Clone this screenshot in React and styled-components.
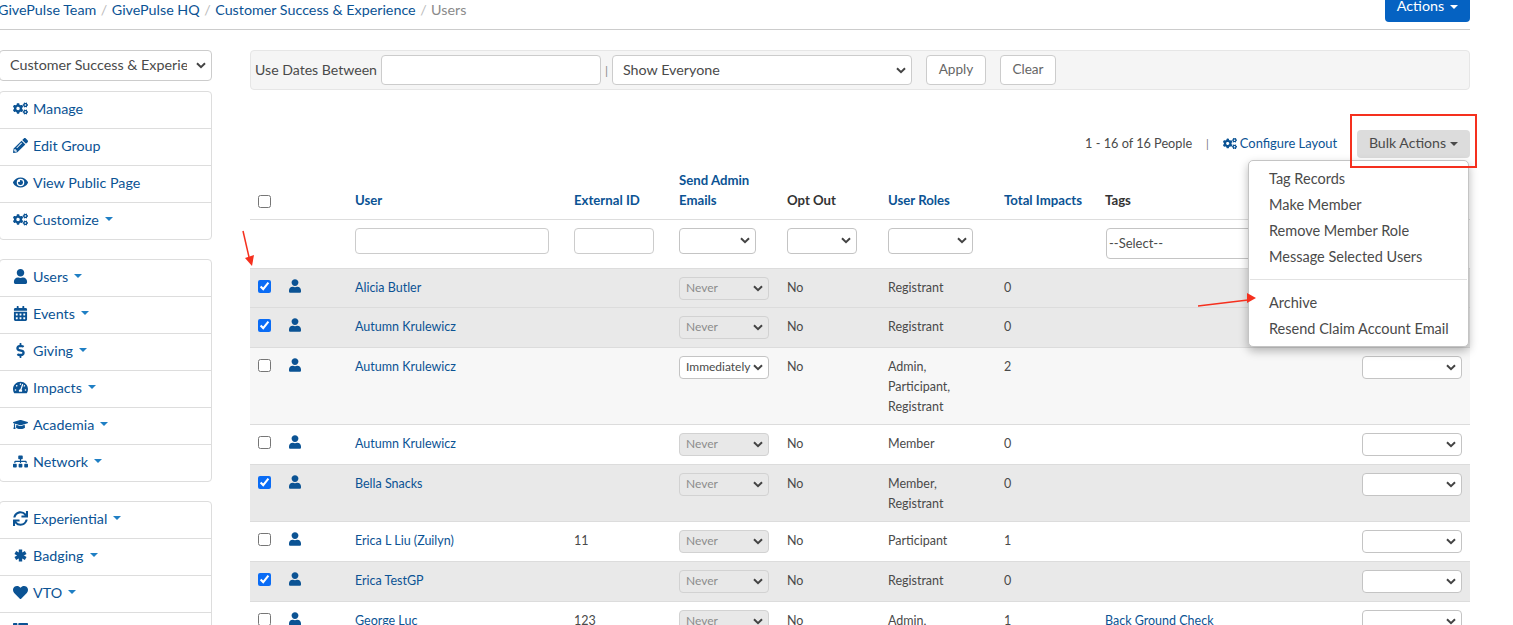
import React from "react";
import styled, {createGlobalStyle} from "styled-components";
import {
    FaCalendarAlt, FaCogs, FaDollarSign, FaEye, FaGraduationCap, FaHeart,
    FaPencilAlt, FaSitemap, FaSync, FaTachometerAlt, FaThList, FaUser
} from "react-icons/fa";

const BLUE = "#0b5394";
const TEXT = "#4a4a4a";
const CHEVRON = `url("data:image/svg+xml,%3Csvg xmlns='http://www.w3.org/2000/svg' width='10' height='7' viewBox='0 0 10 7'%3E%3Cpath d='M1 1.2l4 4 4-4' fill='none' stroke='%23444' stroke-width='2'/%3E%3C/svg%3E")`;

const Global = createGlobalStyle`
  html, body {
    margin: 0;
    height: 625px;
    overflow: hidden;
    background: #fff;
  }

  body {
    font-family: Lato, "Open Sans", sans-serif;
    font-size: 14.3px;
    color: ${TEXT};
  }

  * {
    box-sizing: border-box;
  }
`;

const Page = styled.div`
  width: 1471px;
  margin-left: -1px;
`;

const TopBar = styled.div`
  height: 30px;
  display: flex;
  justify-content: space-between;
  align-items: flex-start;
  border-bottom: 1px solid #ccc;
`;

const Crumbs = styled.div`
  display: flex;
  gap: 4.5px;
  height: 20px;
  line-height: 20px;
  margin-left: -1px;
  color: #8a8a8a;
`;

const CrumbLink = styled.span`
  color: ${BLUE};
`;

const Slash = styled.span`
  color: #bbb;
`;

const ActionsButton = styled.div`
  width: 85px;
  height: 34px;
  margin-top: -12px;
  padding-top: 9px;
  text-align: center;
  line-height: 17px;
  color: #fff;
  background: #0562c2;
  border-radius: 0 0 4px 4px;
`;

const Caret = styled.i`
  display: inline-block;
  margin-left: ${({$gap}) => $gap || 6}px;
  vertical-align: 2px;
  border-top: 4px solid ${({$color}) => $color || "currentColor"};
  border-left: 4px solid transparent;
  border-right: 4px solid transparent;
`;

const Columns = styled.div`
  display: flex;
  gap: 38px;
  padding-top: 20px;
`;

const Sidebar = styled.aside`
  width: 213px;
  flex: none;
`;

const GroupSelect = styled.select`
  appearance: none;
  display: block;
  width: 100%;
  height: 31px;
  padding: 0 24px 2px 10px;
  margin-bottom: 10px;
  font: inherit;
  color: ${TEXT};
  background: #fff ${CHEVRON} no-repeat right 5px center;
  border: 1px solid #ccc;
  border-radius: 4px;
`;

const NavPanel = styled.nav`
  margin-bottom: 19px;
  border: 1px solid #ddd;
  border-radius: 4px;
`;

const NavItem = styled.div`
  display: flex;
  align-items: center;
  height: ${({$first}) => ($first ? 36 : 37)}px;
  padding: 0 0 4px 13px;
  color: ${BLUE};
  border-top: ${({$first}) => ($first ? "none" : "1px solid #ddd")};

  svg {
    width: 15px;
    height: 15px;
    margin-right: 5px;
    flex: none;
  }
`;

const Main = styled.main`
  flex: 1;
  min-width: 0;
  position: relative;
`;

const FilterBar = styled.div`
  display: flex;
  align-items: center;
  height: 40px;
  padding: 0 4px;
  background: #f5f5f5;
  border: 1px solid #e6e6e6;
  border-radius: 4px;
`;

const FilterLabel = styled.span`
  margin-right: 4px;
  padding-bottom: 2px;
  font-size: 14.1px;
`;

const TextInput = styled.input`
  display: block;
  width: ${({$w}) => $w}px;
  height: ${({$h}) => $h || 26}px;
  background: #fff;
  border: 1px solid #ccc;
  border-radius: 4px;
`;

const Pipe = styled.span`
  margin: 0 4px;
  color: #888;
  font-size: 12px;
`;

const EveryoneSelect = styled.select`
  appearance: none;
  width: 300px;
  height: 30px;
  padding: 0 24px 2px 10px;
  margin-right: 14px;
  font: inherit;
  color: ${TEXT};
  background: #fff ${CHEVRON} no-repeat right 5px center;
  border: 1px solid #ccc;
  border-radius: 4px;
`;

const Plain = styled.button`
  height: 30px;
  width: ${({$w}) => $w}px;
  margin-right: 14px;
  padding: 0 0 2px;
  font: inherit;
  font-size: 13.6px;
  color: #666;
  background: #fff;
  border: 1px solid #ccc;
  border-radius: 4px;
`;

const Toolbar = styled.div`
  display: flex;
  justify-content: flex-end;
  align-items: center;
  height: 28px;
  margin: 40px 0 11px;
  font-size: 12.9px;
`;

const Count = styled.span`
  padding-bottom: 2px;
  font-size: 12.7px;
  color: ${TEXT};
`;

const Bar = styled.span`
  margin: 0 14px 0 14px;
  padding-bottom: 2px;
  color: #777;
  font-size: 11px;
`;

const ConfigLink = styled.span`
  display: flex;
  align-items: center;
  gap: 3px;
  margin-right: 20px;
  padding-bottom: 2px;
  color: ${BLUE};

  svg {
    width: 14px;
    height: 13px;
  }
`;

const BulkWrap = styled.div`
  position: relative;
`;

const BulkButton = styled.div`
  width: 113px;
  height: 28px;
  line-height: 26px;
  text-align: center;
  font-size: 14.1px;
  color: ${TEXT};
  background: #dcdcdc;
  border-radius: 4px;
`;

const RedBox = styled.div`
  position: absolute;
  top: -16px;
  left: -7px;
  width: 127px;
  height: 54px;
  border: 2px solid #f5301e;
  z-index: 3;
  pointer-events: none;
`;

const Menu = styled.div`
  position: absolute;
  top: 30px;
  right: 1px;
  width: 221px;
  height: 187px;
  padding: 5px 0;
  font-size: 14.5px;
  background: #fff;
  border: 1px solid #c4c4c4;
  border-radius: 5px;
  box-shadow: 0 4px 10px rgba(0, 0, 0, .28);
  z-index: 2;
`;

const MenuItem = styled.div`
  height: 26px;
  line-height: 26px;
  padding-left: 20px;
  white-space: nowrap;
`;

const MenuRule = styled.hr`
  height: 1px;
  margin: 9px 1px 10px;
  background: #e2e2e2;
  border: 0;
`;

const Table = styled.table`
  width: 100%;
  table-layout: fixed;
  border-collapse: collapse;
  font-size: 12.5px;
`;

const Head = styled.th`
  padding: 0 9px 9px;
  height: 50px;
  vertical-align: bottom;
  text-align: left;
  font-weight: 700;
  font-size: 13.2px;
  line-height: 20px;
  color: ${({$link}) => ($link ? BLUE : "#333")};
  border-bottom: 1px solid #ddd;
`;

const CheckHead = styled(Head)`
  padding-left: 8px;
  padding-bottom: 11px;
`;

const FilterCell = styled.td`
  height: 49px;
  padding: 8px 9px 0;
  vertical-align: top;
`;

const Row = styled.tr`
  height: ${({$h}) => $h}px;
  background: ${({$tone}) => $tone};
  border-top: 1px solid #dcdcdc;
`;

const Cell = styled.td`
  padding: 9px 9px 7px;
  vertical-align: top;
  line-height: 20px;
  color: ${({$link}) => ($link ? BLUE : TEXT)};
`;

const CheckCell = styled(Cell)`
  padding-left: 8px;
`;

const Check = styled.input.attrs({type: "checkbox"})`
  display: block;
  margin: ${({$head}) => ($head ? 0 : "2px 0 0")};
  width: 13px;
  height: 13px;
  accent-color: #0a6cf5;
`;

const PersonIcon = styled(FaUser)`
  display: block;
  width: 12px;
  height: 14px;
  margin-top: 1px;
  color: ${BLUE};
`;

const Picker = styled.select`
  appearance: none;
  display: block;
  width: ${({$w}) => $w}px;
  height: ${({$h}) => $h || 23}px;
  margin-top: ${({$row}) => ($row ? -1 : 0)}px;
  padding: 0 0 0 6px;
  font: inherit;
  font-size: 12px;
  color: ${({disabled}) => (disabled ? "#8c8c8c" : TEXT)};
  background: ${({disabled}) => (disabled ? "#e8e8e8" : "#fff")} ${CHEVRON} no-repeat right 5px center;
  border: 1px solid ${({disabled}) => (disabled ? "#d2d2d2" : "#c4c4c4")};
  border-radius: 4px;
  opacity: 1;
`;

const TagPicker = styled(Picker)`
  margin-left: 1px;
  padding-left: 2px;
  font-size: 13px;
`;

const ArrowLayer = styled.svg`
  position: absolute;
  left: ${({$x}) => $x}px;
  top: ${({$y}) => $y}px;
  z-index: 4;
  pointer-events: none;
`;

const Asterisk = () => (
    <svg viewBox="0 0 15 15">
        <path d="M7.5 1.5v12M2.3 4.5l10.4 6M12.7 4.5l-10.4 6" stroke="currentColor" strokeWidth="3.4" fill="none"/>
    </svg>
);

const navOne = [
    [FaCogs, "Manage"],
    [FaPencilAlt, "Edit Group"],
    [FaEye, "View Public Page"],
    [FaCogs, "Customize", true],
];
const navTwo = [
    [FaUser, "Users", true],
    [FaCalendarAlt, "Events", true],
    [FaDollarSign, "Giving", true],
    [FaTachometerAlt, "Impacts", true],
    [FaGraduationCap, "Academia", true],
    [FaSitemap, "Network", true],
];
const navThree = [
    [FaSync, "Experiential", true],
    [Asterisk, "Badging", true],
    [FaHeart, "VTO", true],
    [FaThList, "Lists", true],
];

const people = [
    {name: "Alicia Butler", checked: true, roles: ["Registrant"], impacts: 0, h: 39},
    {name: "Autumn Krulewicz", checked: true, roles: ["Registrant"], impacts: 0, h: 40},
    {name: "Autumn Krulewicz", roles: ["Admin,", "Participant,", "Registrant"], impacts: 2, h: 77, mail: "Immediately", tone: "#f7f7f7"},
    {name: "Autumn Krulewicz", roles: ["Member"], impacts: 0, h: 40},
    {name: "Bella Snacks", checked: true, roles: ["Member,", "Registrant"], impacts: 0, h: 57},
    {name: "Erica L Liu (Zuilyn)", ext: "11", roles: ["Participant"], impacts: 1, h: 40},
    {name: "Erica TestGP", checked: true, roles: ["Registrant"], impacts: 0, h: 40},
    {name: "George Luc", ext: "123", roles: ["Admin,", "Participant"], impacts: 1, h: 57, tag: "Back Ground Check"},
];

const widths = [30, 66, 219, 105, 108, 101, 116, 101, 257, 117];

const NavList = ({items}) => (
    <NavPanel>
        {items.map(([Icon, label, caret], i) => (
            <NavItem key={label} $first={i === 0}>
                <Icon/>
                {label}
                {caret && <Caret $color="#1f7fc4"/>}
            </NavItem>
        ))}
    </NavPanel>
);

export default function App() {
    return (
        <Page>
            <Global/>
            <TopBar>
                <Crumbs>
                    <CrumbLink>GivePulse Team</CrumbLink><Slash>/</Slash>
                    <CrumbLink>GivePulse HQ</CrumbLink><Slash>/</Slash>
                    <CrumbLink>Customer Success &amp; Experience</CrumbLink><Slash>/</Slash>
                    <span>Users</span>
                </Crumbs>
                <ActionsButton>Actions<Caret/></ActionsButton>
            </TopBar>
            <Columns>
                <Sidebar>
                    <GroupSelect defaultValue="c">
                        <option value="c">Customer Success &amp; Experience</option>
                    </GroupSelect>
                    <NavList items={navOne}/>
                    <NavList items={navTwo}/>
                    <NavList items={navThree}/>
                </Sidebar>
                <Main>
                    <FilterBar>
                        <FilterLabel>Use Dates Between</FilterLabel>
                        <TextInput $w={220} $h={30}/>
                        <Pipe>|</Pipe>
                        <EveryoneSelect defaultValue="e">
                            <option value="e">Show Everyone</option>
                        </EveryoneSelect>
                        <Plain $w={60}>Apply</Plain>
                        <Plain $w={56}>Clear</Plain>
                    </FilterBar>
                    <Toolbar>
                        <Count>1 - 16 of 16 People</Count>
                        <Bar>|</Bar>
                        <ConfigLink><FaCogs/>Configure Layout</ConfigLink>
                        <BulkWrap>
                            <BulkButton>Bulk Actions<Caret $gap={4}/></BulkButton>
                            <RedBox/>
                            <Menu>
                                <MenuItem>Tag Records</MenuItem>
                                <MenuItem>Make Member</MenuItem>
                                <MenuItem>Remove Member Role</MenuItem>
                                <MenuItem>Message Selected Users</MenuItem>
                                <MenuRule/>
                                <MenuItem>Archive</MenuItem>
                                <MenuItem>Resend Claim Account Email</MenuItem>
                            </Menu>
                        </BulkWrap>
                    </Toolbar>
                    <Table>
                        <colgroup>
                            {widths.map((w, i) => <col key={i} style={{width: w}}/>)}
                        </colgroup>
                        <thead>
                        <tr>
                            <CheckHead><Check $head/></CheckHead>
                            <Head/>
                            <Head $link>User</Head>
                            <Head $link>External ID</Head>
                            <Head $link>Send Admin Emails</Head>
                            <Head>Opt Out</Head>
                            <Head $link>User Roles</Head>
                            <Head $link>Total Impacts</Head>
                            <Head>Tags</Head>
                            <Head/>
                        </tr>
                        <tr>
                            <FilterCell/>
                            <FilterCell/>
                            <FilterCell><TextInput $w={194}/></FilterCell>
                            <FilterCell><TextInput $w={80}/></FilterCell>
                            <FilterCell><Picker $w={77} $h={26}/></FilterCell>
                            <FilterCell><Picker $w={70} $h={26}/></FilterCell>
                            <FilterCell><Picker $w={85} $h={26}/></FilterCell>
                            <FilterCell/>
                            <FilterCell>
                                <TagPicker $w={240} $h={31} defaultValue="s">
                                    <option value="s">--Select--</option>
                                </TagPicker>
                            </FilterCell>
                            <FilterCell/>
                        </tr>
                        </thead>
                        <tbody>
                        {people.map((p, i) => (
                            <Row key={i} $h={p.h} $tone={p.tone || (p.checked ? "#e9e9e9" : "#fff")}>
                                <CheckCell><Check defaultChecked={!!p.checked}/></CheckCell>
                                <Cell><PersonIcon/></Cell>
                                <Cell $link>{p.name}</Cell>
                                <Cell>{p.ext}</Cell>
                                <Cell>
                                    <Picker $row $w={90} disabled={!p.mail} defaultValue="x">
                                        <option value="x">{p.mail || "Never"}</option>
                                    </Picker>
                                </Cell>
                                <Cell>No</Cell>
                                <Cell>{p.roles.map(r => <div key={r}>{r}</div>)}</Cell>
                                <Cell>{p.impacts}</Cell>
                                <Cell $link>{p.tag}</Cell>
                                <Cell><Picker $row $w={100}/></Cell>
                            </Row>
                        ))}
                        </tbody>
                    </Table>
                    {/* red pointers drawn on top of the table */}
                    <ArrowLayer $x={-12} $y={180} width="24" height="40" viewBox="0 0 24 40">
                        <path d="M5 1l6 26" stroke="#f5301e" strokeWidth="1.5" fill="none"/>
                        <path d="M7 28l9-3-2 11z" fill="#f5301e"/>
                    </ArrowLayer>
                    <ArrowLayer $x={946} $y={240} width="62" height="24" viewBox="0 0 62 24">
                        <path d="M2 16l50-6" stroke="#f5301e" strokeWidth="1.5" fill="none"/>
                        <path d="M51 3l9 5-9 5z" fill="#f5301e"/>
                    </ArrowLayer>
                </Main>
            </Columns>
        </Page>
    );
}
